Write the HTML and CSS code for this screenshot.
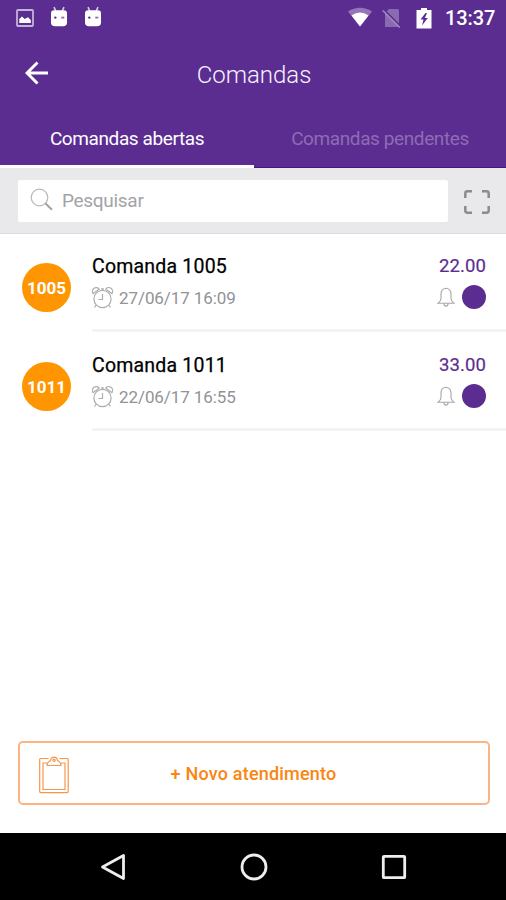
FILE: index.html
```html
<!DOCTYPE html>
<html lang="pt-BR">
<head>
<meta charset="utf-8">
<title>Comandas</title>
<link rel="stylesheet" href="styles.css">
</head>
<body>
<svg width="0" height="0" class="sprite" aria-hidden="true">
  <symbol id="android" viewBox="0 0 18 22">
    <path d="M4 1.2 5.8 5M14 1.2 12.200 5" stroke="#d9cce9" stroke-width="1.600" fill="none"/>
    <path d="M1 7.500Q1 4.300 4 4.300H14Q17 4.300 17 7.500V16.500Q17 20.300 13 20.300H5Q1 20.300 1 16.500Z" fill="#fff"/>
    <circle cx="5.300" cy="11.600" r="1.200" fill="#5c2d91"/>
    <path d="M11.300 11.600h3" stroke="#8b6bb0" stroke-width="1.800"/>
  </symbol>
  <symbol id="alarm" viewBox="0 0 22 22">
    <g fill="none" stroke="#adadb0" stroke-width="1.200">
      <circle cx="10.500" cy="12" r="8.600"/>
      <path d="M1.100 6.600A3.600 3.600 0 0 1 7.200 2.200ZM19.900 6.600A3.600 3.600 0 0 0 13.800 2.200Z"/>
      <path d="M10.500 3.400V1.800M9.100 1.800h2.800M10.500 7v5.500H6.500M4.300 18 2.500 20.300M16.700 18 18.500 20.300"/>
    </g>
  </symbol>
  <symbol id="bell" viewBox="0 0 18 20">
    <g fill="none" stroke="#a6a6aa" stroke-width="1.100">
      <path d="M9 1.200C5.400 1.600 4 4 4 7V11.500C4 13.500 3 14.700 1 16.200H17C15 14.700 14 13.500 14 11.500V7C14 4 12.600 1.600 9 1.200Z"/>
      <path d="M6.900 16.500a2.100 2.600 0 0 0 4.200 0"/>
    </g>
  </symbol>
</svg>
<div class="app">
  <header class="header">
    <div class="status">
      <div class="notices">
        <svg width="18" height="18" viewBox="0 0 18 18"><rect x="1" y="1" width="16" height="16" rx="1" fill="none" stroke="#c3b3d8" stroke-width="1.800"/><path d="M3.300 14V10L6 7.600 8.600 10 12 8.300 14.800 11V14Z" fill="#fff"/></svg>
        <svg width="18" height="22"><use href="#android"/></svg>
        <svg width="18" height="22"><use href="#android"/></svg>
      </div>
      <div class="indicators">
        <svg class="wifi" width="26" height="20" viewBox="0 0 26 20"><path d="M1 4.500Q13-3 25 4.500L13 19.500Z" fill="#9475b8"/><path d="M4.500 8.500Q13 2.500 21.500 8.500L13 19.500Z" fill="#fff"/></svg>
        <svg class="nosim" width="19" height="20" viewBox="0 0 19 20"><path d="M7 1H15.500Q17 1 17 2.500V19H3V5Z" fill="#8b6bb0"/><path d="M1.500 1.500 18.500 18.500" stroke="#5c2d91" stroke-width="2"/><path d="M.800 2.500 17.800 19.500" stroke="#a58bc4" stroke-width="1.500"/></svg>
        <svg class="battery" width="16" height="21" viewBox="0 0 16 21"><path d="M5 0H11V2H15.500V20.500H.500V2H5Z" fill="#fff"/><path d="M9.500 5 4.500 11.500H7.500L6 17.500 11.800 10H8.800L11 5Z" fill="#5c2d91"/></svg>
        <span class="clock">13:37</span>
      </div>
    </div>
    <div class="toolbar">
      <svg class="back" width="24" height="24" viewBox="0 0 24 24"><path d="M12.500 1.500 2 12 12.500 22.500M2 12H23" fill="none" stroke="#fff" stroke-width="2.900"/></svg>
      <h1 class="title">Comandas</h1>
    </div>
    <nav class="tabs">
      <div class="tab active"><span>Comandas abertas</span></div>
      <div class="tab"><span>Comandas pendentes</span></div>
    </nav>
  </header>
  <section class="search">
    <div class="field">
      <svg width="24" height="24" viewBox="0 0 24 24"><circle cx="9.500" cy="9.500" r="8.300" fill="none" stroke="#b8b8bb" stroke-width="1.200"/><path d="M15.300 15.300 22 21.800" stroke="#a2a2a6" stroke-width="2"/></svg>
      <span class="placeholder">Pesquisar</span>
    </div>
    <svg class="scan" width="26" height="24" viewBox="0 0 26 24"><path d="M1.300 8V3.500Q1.300 1.300 3.500 1.300H8M18 1.300H22.500Q24.700 1.300 24.700 3.500V8M24.700 16V20.500Q24.700 22.700 22.500 22.700H18M8 22.700H3.500Q1.300 22.700 1.300 20.500V16" fill="none" stroke="#8c8c8f" stroke-width="2.500"/></svg>
  </section>
  <main class="list">
    <article class="row">
      <div class="badge">1005</div>
      <div class="content">
        <div class="info">
          <div class="name">Comanda 1005</div>
          <div class="date"><svg width="22" height="22"><use href="#alarm"/></svg><span>27/06/17 16:09</span></div>
        </div>
        <div class="side">
          <div class="price">22.00</div>
          <div class="state"><svg width="18" height="20"><use href="#bell"/></svg><i class="dot"></i></div>
        </div>
      </div>
    </article>
    <article class="row">
      <div class="badge">1011</div>
      <div class="content">
        <div class="info">
          <div class="name">Comanda 1011</div>
          <div class="date"><svg width="22" height="22"><use href="#alarm"/></svg><span>22/06/17 16:55</span></div>
        </div>
        <div class="side">
          <div class="price">33.00</div>
          <div class="state"><svg width="18" height="20"><use href="#bell"/></svg><i class="dot"></i></div>
        </div>
      </div>
    </article>
  </main>
  <div class="action">
    <svg width="30" height="38" viewBox="0 0 30 38"><g fill="none" stroke="#f5974c" stroke-width="1.200"><path d="M9.500 2.500H1.500Q.700 2.500 .700 3.500V35.500Q.700 36.700 1.800 36.700H28Q29.200 36.700 29.200 35.500V3.500Q29.200 2.500 28.500 2.500H20.500"/><path d="M8 7H4V33.500H26V7H22"/><path d="M8 9.500C8 6 10 5.500 11.500 4.500C12 0 18 0 18.500 4.500C20 5.500 22 6 22 9.500Z"/><circle cx="15" cy="4.300" r="1.200"/></g></svg>
    <span>+ Novo atendimento</span>
  </div>
  <footer class="nav">
    <div><svg width="26" height="28" viewBox="0 0 26 28"><path d="M23.500 2.500V25.500L2.500 14Z" fill="none" stroke="#eee" stroke-width="2.800" stroke-linejoin="round"/></svg></div>
    <div><svg width="28" height="28" viewBox="0 0 28 28"><circle cx="14" cy="14" r="12" fill="none" stroke="#eee" stroke-width="2.800"/></svg></div>
    <div><svg width="26" height="26" viewBox="0 0 26 26"><rect x="2.300" y="2.300" width="21.400" height="21.400" rx=".8" fill="none" stroke="#eee" stroke-width="2.800"/></svg></div>
  </footer>
</div>
</body>
</html>
```
FILE: styles.css
```css
* { box-sizing: border-box; }
body { margin: 0; font-family: Roboto, sans-serif; background: #fff; }
svg { display: block; flex: none; }
.sprite { position: absolute; }
.app { width: 506px; height: 900px; display: flex; flex-direction: column; overflow: hidden; }
.header { height: 168px; background: #5c2d91; color: #fff; }
.status { height: 36px; display: flex; justify-content: space-between; padding: 0 11px 0 16px; }
.notices, .indicators { display: flex; align-items: center; }
.notices { gap: 16px; }
.notices svg + svg { margin-top: -3px; }
.wifi { margin-right: 9px; margin-top: -2px; }
.nosim { margin-right: 15px; }
.battery { margin-right: 13px; }
.clock { width: 50px; font-size: 20px; font-weight: 500; line-height: 36px; letter-spacing: -.1px; white-space: nowrap; }
.toolbar { height: 75px; display: grid; grid-template-columns: 50px 1fr 50px; align-items: center; }
.back { margin: -1px 0 0 25px; }
.title { margin: 2px 0 0 2px; font-size: 24px; line-height: 30px; font-weight: 300; text-align: center; color: #f7f2fc; }
.tabs { height: 57px; display: grid; grid-template-columns: 254px 252px; }
.tab { display: flex; justify-content: center; padding-top: 16px; font-size: 19px; letter-spacing: -.4px; line-height: 24px; color: #8e6bb4; border-bottom: 1px solid #48148a; white-space: nowrap; }
.tab.active { color: #fff; border-bottom: 3px solid #fff; }
.search { height: 66px; padding: 0 16px 0 18px; display: flex; align-items: center; background: #e9e9eb; border-bottom: 1px solid #dcdcde; }
.field { width: 430px; height: 42px; display: flex; align-items: center; gap: 8px; padding: 0 0 0 12px; margin-right: 16px; background: #fff; border-radius: 2px; }
.field svg { margin-top: -2px; }
.placeholder { font-size: 19px; letter-spacing: -.3px; line-height: 24px; color: #a3a3a7; padding-top: 1px; }
.scan { margin-top: 2px; }
.list { flex: 1; }
.row { height: 99px; display: flex; padding-left: 22px; }
.badge { width: 49px; height: 49px; margin: 29px 21px 0 0; border-radius: 50%; background: #ff9500; color: #fff; font-size: 17px; font-weight: 700; line-height: 50px; text-align: center; }
.content { flex: 1; display: flex; justify-content: space-between; padding: 21px 20px 0 0; border-bottom: 3px solid #f3f3f3; margin-top: -1px; height: 99px; }
.name { font-size: 19.5px; letter-spacing: .2px; line-height: 26px; color: #000; -webkit-text-stroke: .25px #000; }
.date { display: flex; align-items: center; gap: 5px; margin-top: 7px; height: 22px; font-size: 17px; letter-spacing: -.08px; color: #929297; }
.side { display: flex; flex-direction: column; align-items: flex-end; }
.price { font-size: 18.5px; line-height: 24px; letter-spacing: .1px; color: #5c2d91; -webkit-text-stroke: .2px #5c2d91; }
.state { display: flex; align-items: center; gap: 7px; margin-top: 7px; }
.dot { width: 24px; height: 24px; border-radius: 50%; background: #5c2d91; }
.action { position: relative; height: 64px; margin: 0 16px 28px 18px; padding-left: 19px; display: grid; grid-template-columns: 30px 1fr 50px; align-items: center; border: 2px solid #fcb582; border-radius: 5px; color: #fa8510; font-size: 18px; font-weight: 500; letter-spacing: .2px; text-align: center; }
.action svg { margin-top: 3px; }
.action span { padding-top: 1px; }
.nav { height: 67px; background: #000; display: grid; grid-template-columns: 183.500px 140px 182.500px; align-items: center; }
.nav div { display: flex; justify-content: center; }
.nav div:first-child { padding-left: 42px; }
.nav div:last-child { padding-right: 42px; }
```
